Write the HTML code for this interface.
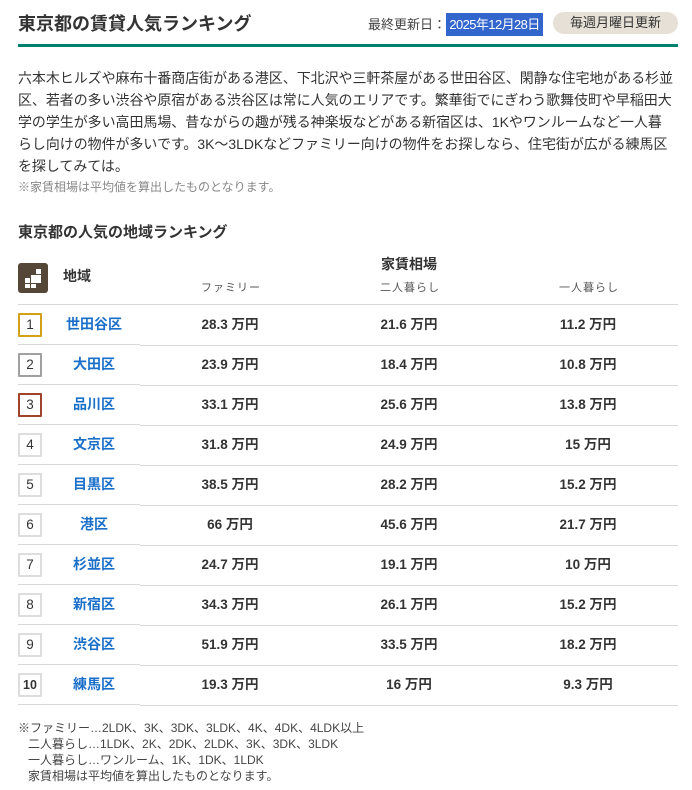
<!DOCTYPE html>
<html><head><meta charset="utf-8"><style>
*{margin:0;padding:0;box-sizing:border-box}
body{width:692px;height:790px;background:#fff;font-family:"Liberation Sans","Noto Sans CJK JP",sans-serif;color:#333;position:relative;overflow:hidden}
.a{position:absolute;white-space:nowrap}
.title{left:18px;top:12px;font-size:18px;font-weight:bold;color:#333;line-height:24px}
.bar{left:18px;top:44px;width:660px;height:3px;background:#00806e}
.upd{left:368px;top:13px;font-size:13px;line-height:23px;color:#444}
.hl{background:#3366cc;color:#fff;display:inline-block;width:97px;height:23px;text-align:center;letter-spacing:-0.6px}
.pill{left:553px;top:12px;width:125px;height:22px;border-radius:11px;background:#e6e0d6;font-size:13px;line-height:22px;text-align:center;color:#333}
.p{left:18px;top:67px;font-size:13.95px;line-height:22px;color:#333}
.note{left:18px;top:180px;font-size:12px;color:#888;line-height:15px}
.h2{left:18px;top:223px;font-size:15px;font-weight:bold;line-height:20px}
.ic{left:18px;top:263px;width:30px;height:30px;background:#554737;border-radius:3px}
.th{font-size:14px;font-weight:bold;line-height:16px}
.sub{font-size:11px;color:#555;line-height:14px;letter-spacing:1px;transform:translateX(-50%)}
.line{height:1px;background:#d8d8d8}
.badge{left:18px;width:24px;height:24px;border:2px solid #ddd;font-size:13.5px;line-height:20px;text-align:center;color:#333;border-radius:1px}
.nm{font-size:14px;font-weight:bold;color:#1a6fc9;line-height:16px;transform:translateX(-50%)}
.v{font-size:13.5px;font-weight:bold;color:#333;line-height:16px;transform:translateX(-50%)}
.ft{left:18px;top:720px;font-size:12px;line-height:16px;color:#444}
</style></head><body>
<div class="a title">東京都の賃貸人気ランキング</div>
<div class="a upd">最終更新日：<span class="hl">2025年12月28日</span></div>
<div class="a pill">毎週月曜日更新</div>
<div class="a bar"></div>
<div class="a p">六本木ヒルズや麻布十番商店街がある港区、下北沢や三軒茶屋がある世田谷区、閑静な住宅地がある杉並<br>区、若者の多い渋谷や原宿がある渋谷区は常に人気のエリアです。繁華街でにぎわう歌舞伎町や早稲田大<br>学の学生が多い高田馬場、昔ながらの趣が残る神楽坂などがある新宿区は、1Kやワンルームなど一人暮<br>らし向けの物件が多いです。3K～3LDKなどファミリー向けの物件をお探しなら、住宅街が広がる練馬区<br>を探してみては。</div>
<div class="a note">※家賃相場は平均値を算出したものとなります。</div>
<div class="a h2">東京都の人気の地域ランキング</div>
<div class="a ic"><svg width="30" height="30" viewBox="0 0 30 30"><rect x="18" y="6" width="5" height="5" fill="#fff"/><rect x="13" y="12" width="10" height="8" fill="#fff"/><rect x="7" y="15" width="5" height="5" fill="#fff"/><rect x="7" y="21" width="5" height="4" fill="#fff"/><rect x="13" y="21" width="5" height="4" fill="#fff"/></svg></div>
<div class="a th" style="left:63px;top:268px">地域</div>
<div class="a th" style="left:381px;top:256px">家賃相場</div>
<div class="a sub" style="left:231px;top:281px">ファミリー</div>
<div class="a sub" style="left:410px;top:281px">二人暮らし</div>
<div class="a sub" style="left:589px;top:281px">一人暮らし</div>
<div class="a line" style="left:18px;top:304px;width:660px"></div>
<div id="rows"></div>
<script>
var d=[["世田谷区","28.3","21.6","11.2","#d4a017"],["大田区","23.9","18.4","10.8","#a0a0a0"],["品川区","33.1","25.6","13.8","#a0432a"],["文京区","31.8","24.9","15",""],["目黒区","38.5","28.2","15.2",""],["港区","66","45.6","21.7",""],["杉並区","24.7","19.1","10",""],["新宿区","34.3","26.1","15.2",""],["渋谷区","51.9","33.5","18.2",""],["練馬区","19.3","16","9.3",""]];
var h="";
d.forEach(function(r,i){var c=325+40*i;
h+='<div class="a badge" style="top:'+(c-12)+'px;'+(r[4]?'border-color:'+r[4]:'')+(i==9?';font-size:12.5px;font-weight:bold':'')+'">'+(i+1)+'</div>';
h+='<div class="a nm" style="left:94px;top:'+(c-9)+'px">'+r[0]+'</div>';
h+='<div class="a v" style="left:230px;top:'+(c-8)+'px">'+r[1]+' 万円</div>';
h+='<div class="a v" style="left:409px;top:'+(c-8)+'px">'+r[2]+' 万円</div>';
h+='<div class="a v" style="left:588px;top:'+(c-8)+'px">'+r[3]+' 万円</div>';
h+='<div class="a line" style="left:18px;top:'+(c+19)+'px;width:122px"></div>';
h+='<div class="a line" style="left:140px;top:'+(c+20)+'px;width:538px"></div>';
});
document.getElementById("rows").innerHTML=h;
</script>
<div class="a ft">※ファミリー…2LDK、3K、3DK、3LDK、4K、4DK、4LDK以上<br>&nbsp;&nbsp;&nbsp;二人暮らし…1LDK、2K、2DK、2LDK、3K、3DK、3LDK<br>&nbsp;&nbsp;&nbsp;一人暮らし…ワンルーム、1K、1DK、1LDK<br>&nbsp;&nbsp;&nbsp;家賃相場は平均値を算出したものとなります。</div>
</body></html>
